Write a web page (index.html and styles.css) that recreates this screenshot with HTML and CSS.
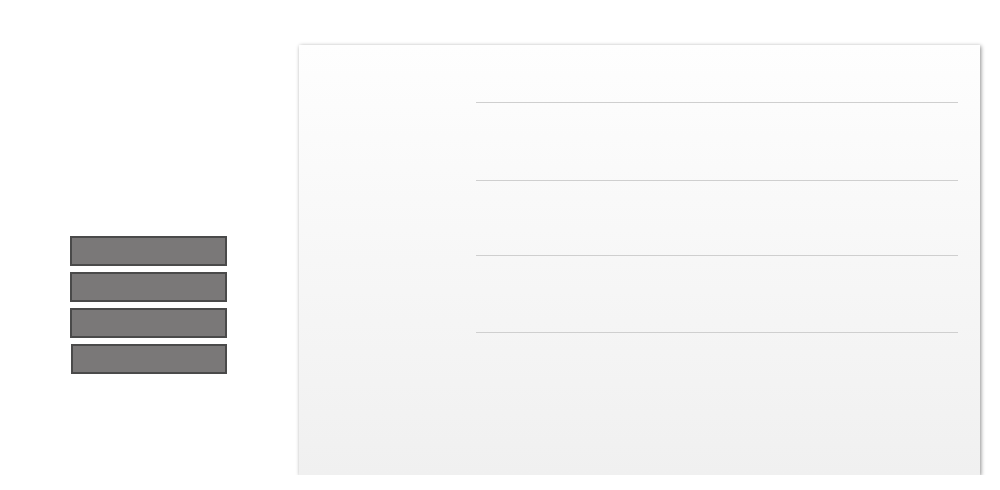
FILE: index.html
```html
<!DOCTYPE html>
<html lang="en">
<head>
    <meta charset="UTF-8">
    <meta name="viewport" content="width=device-width, initial-scale=1.0">
    <title>Form</title>
    <link rel="stylesheet" href="styles.css">
</head>
<body>
    <div class="page">
        <div class="sidebar">
            <button class="menu-btn"></button>
            <button class="menu-btn"></button>
            <button class="menu-btn"></button>
            <button class="menu-btn last"></button>
        </div>

        <div class="panel">
            <div class="rows">
                <div class="row row-top"></div>
                <div class="row row-a"></div>
                <div class="row row-b"></div>
                <div class="row row-c"></div>
            </div>
        </div>
    </div>
</body>
</html>
```

FILE: styles.css
```css
body {
    margin: 0;
    font-family: "Liberation Sans", Arial, sans-serif;
    background-color: #fff;
}
.page {
    display: flex;
    padding-top: 45px;
}
.sidebar {
    width: 299px;
    box-sizing: border-box;
    display: flex;
    flex-direction: column;
    align-items: flex-start;
    gap: 6px;
    padding-top: 191px;
    padding-left: 70px;
}
.menu-btn {
    width: 157px;
    height: 30px;
    margin: 0;
    padding: 0;
    background-color: #7a7878;
    border: 2px solid #4a4a4a;
    box-sizing: border-box;
}
.menu-btn.last {
    width: 156px;
    margin-left: 1px;
}
.panel {
    width: 681px;
    height: 430px;
    box-sizing: border-box;
    background: linear-gradient(to bottom, #fefefe 0%, #f0f0f0 100%);
    box-shadow: 1px 1px 4px rgba(0, 0, 0, 0.45);
    padding: 0 22px 0 177px;
}
.row {
    border-bottom: 1px solid #cfcfcf;
}
.row-top {
    height: 57px;
}
.row-a {
    height: 77px;
}
.row-b {
    height: 74px;
}
.row-c {
    height: 76px;
}
```
